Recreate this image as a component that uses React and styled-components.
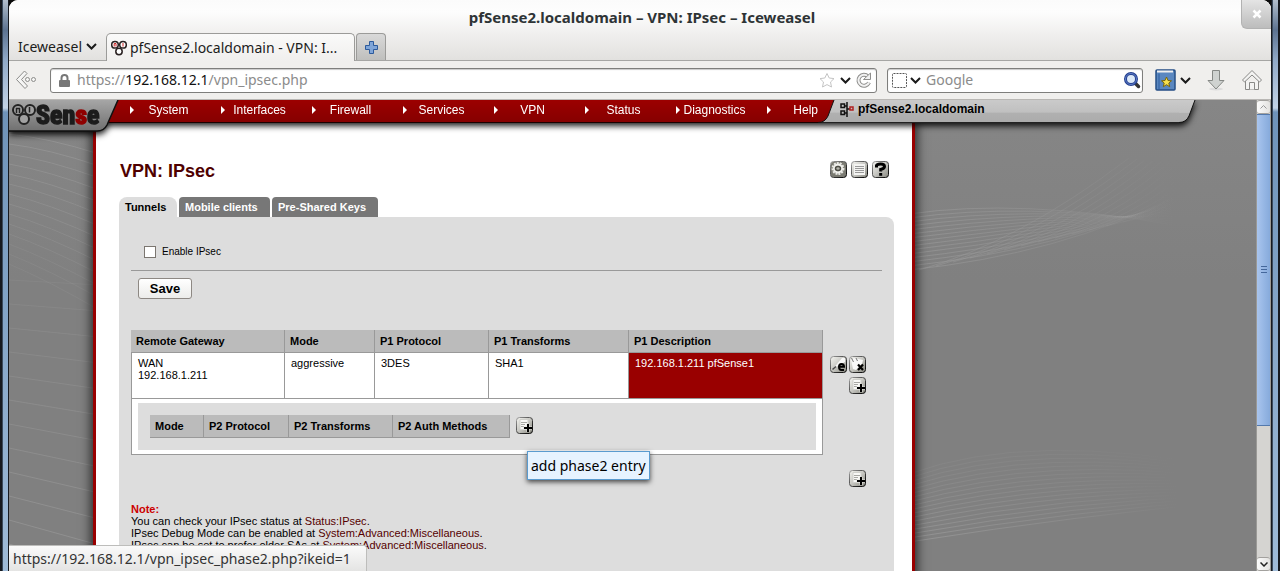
import { useState } from 'react';
import styled, { createGlobalStyle, css } from 'styled-components';

const GlobalStyle = createGlobalStyle`
  * {
    box-sizing: border-box;
  }

  body {
    margin: 0;
    font-family: "Liberation Sans", Arial, sans-serif;
    font-size: 11px;
    line-height: 12px;
    color: #000;
  }

  button {
    padding: 0;
    border: 0;
    background: none;
    cursor: pointer;
  }

  svg {
    display: block;
  }
`;

const chromeFont = css`
  font-family: "Noto Sans", sans-serif;
  font-size: 14px;
  line-height: 20px;
`;

/* ---------- window ---------- */

const Window = styled.div`
  display: flex;
  height: 100vh;
  overflow: hidden;
  background: #0a0a0a;
`;

const Edge = styled.div`
  flex: none;
  width: 9px;
  border: solid #16191f;
  border-width: ${props => props.$side === 'left' ? '0 1px 0 2px' : '0 2px 0 1px'};
  background:
    linear-gradient(90deg, #3b4a5c 0 1px, transparent 1px),
    linear-gradient(#b3bfcd 0, #5d7391 30px, #90a9c8 60px, #c3d3e6 108px, #6f93b9 112px, #9fbbd8 100%);
`;

const Browser = styled.div`
  flex: 1;
  min-width: 0;
  display: flex;
  flex-direction: column;
  background: #f0efed;
  border-radius: 9px 9px 0 0;
  overflow: hidden;
`;

const TopBar = styled.header`
  flex: none;
  background: linear-gradient(#fbfbfb, #fdfdfd 12px, #f0efee 34px, #e2e1df);
  border-bottom: 1px solid #a6a6a4;
`;

const TitleRow = styled.div`
  display: grid;
  grid-template-columns: 30px 1fr 30px;
  height: 33px;
`;

const WindowTitle = styled.div`
  ${chromeFont}
  grid-column: 2;
  padding-top: 7px;
  padding-left: 4px;
  text-align: center;
  font-size: 15px;
  font-weight: 700;
  color: #2e3436;
`;

const CloseButton = styled.button`
  display: grid;
  place-items: center;
  height: 29px;
  background: linear-gradient(#e4e4e4, #bcbcbc);
  border: solid #b2b2b2;
  border-width: 0 0 1px 1px;
  border-radius: 0 8px 0 6px;
`;

const TabRow = styled.div`
  display: flex;
  align-items: flex-end;
  height: 27px;
`;

const AppMenu = styled.button`
  ${chromeFont}
  display: flex;
  align-items: center;
  gap: 4px;
  width: 97px;
  height: 27px;
  padding-left: 9px;
  color: #1c1c1c;
`;

const BrowserTab = styled.button`
  ${chromeFont}
  display: flex;
  align-items: center;
  gap: 3px;
  width: 249px;
  height: 28px;
  margin-bottom: -1px;
  padding-left: 4px;
  background: linear-gradient(#fafafa, #f0efed);
  border: 1px solid #9b9b99;
  border-bottom: 0;
  border-radius: 5px 5px 0 0;
  color: #1c1c1c;
  white-space: nowrap;
`;

const NewTab = styled.button`
  display: grid;
  place-items: center;
  width: 30px;
  height: 27px;
  margin-left: 1px;
  background: linear-gradient(#d9d9d9, #bfbfbd);
  border: 1px solid #9b9b99;
  border-bottom: 0;
  border-radius: 4px 4px 0 0;
`;

const Toolbar = styled.div`
  flex: none;
  display: flex;
  align-items: center;
  height: 39px;
  padding: 0 8px 0 6px;
  border-bottom: 1px solid #b9b7b4;
`;

const ToolButton = styled.button`
  flex: none;
  display: grid;
  place-items: center;
`;

const BackButton = styled(ToolButton)`
  width: 24px;
  margin-right: 11px;
`;

const Field = styled.div`
  ${chromeFont}
  display: flex;
  align-items: center;
  height: 25px;
  background: #fff;
  border: 1px solid #7e7e7c;
  border-radius: 3px;
  box-shadow: inset 0 1px 1px #c9c9c9;
`;

const AddressField = styled(Field)`
  flex: 1;
  gap: 7px;
  padding: 0 4px 0 8px;
`;

const AddressActions = styled.div`
  display: flex;
  align-items: center;
  gap: 4px;
`;

const Address = styled.div`
  flex: 1;
  color: #8b8b8b;
  outline: none;

  b {
    font-weight: 400;
    color: #111;
  }
`;

const SearchField = styled(Field)`
  width: 256px;
  margin: 0 12px 0 10px;
  padding: 0 1px 0 4px;
  gap: 3px;
`;

const SearchInput = styled.input`
  ${chromeFont}
  flex: 1;
  min-width: 0;
  padding: 0 0 0 2px;
  border: 0;
  outline: none;
  background: none;

  &::placeholder {
    color: #8b8b8b;
    opacity: 1;
  }
`;

const Trailing = styled.div`
  display: flex;
  align-items: center;
  gap: 15px;
`;

const BookmarkGroup = styled(ToolButton)`
  grid-auto-flow: column;
  gap: 4px;
`;

/* ---------- viewport ---------- */

const Viewport = styled.div`
  flex: 1;
  min-height: 0;
  display: flex;
`;

const Page = styled.div`
  flex: 1;
  position: relative;
  min-width: 0;
  overflow: hidden;
  background: linear-gradient(#868686, #808080 180px);
`;

const Waves = styled.svg`
  position: absolute;
  top: 0;
  left: 0;
`;

const Scrollbar = styled.div`
  flex: none;
  display: flex;
  flex-direction: column;
  width: 15px;
  background: #d5d4d1;
  border: solid #9a9996;
  border-width: 0 1px;
`;

const ScrollButton = styled.button`
  display: grid;
  place-items: center;
  height: 14px;
  background: linear-gradient(90deg, #fbfbfb, #e3e2e0);
  border: solid #a3a19e;
  border-width: 1px 0;
  border-radius: 3px;
`;

const Thumb = styled.div`
  flex: 311;
  display: grid;
  place-items: center;
  background: linear-gradient(90deg, #a9c5ee, #86aadb);
  border: solid #5479ac;
  border-width: 1px 0;
`;

const Track = styled.div`
  flex: 131;
`;

const StatusBar = styled.div`
  ${chromeFont}
  position: absolute;
  left: 0;
  bottom: 0;
  min-width: 358px;
  height: 26px;
  padding: 3px 4px;
  background: linear-gradient(#fafafa, #e4e4e3);
  border: solid #bdbdbb;
  border-width: 1px 1px 0 0;
  border-radius: 0 3px 0 0;
  color: #333;
`;

/* ---------- pfSense header ---------- */

const SiteHeader = styled.div`
  position: relative;
  z-index: 1;
  display: flex;
  height: 23px;
  filter: drop-shadow(0 3px 3px rgba(0, 0, 0, 0.9));
`;

const Logo = styled.a`
  z-index: 2;
  width: 110px;
  height: 32px;
  margin-right: -12px;
`;

const Menu = styled.nav`
  z-index: 1;
  display: flex;
  padding-left: 16px;
  background: linear-gradient(#9c0000, #860000);
  border-bottom: 1px solid #1a0000;
`;

const MenuItem = styled.a`
  display: grid;
  grid-template-columns: 4px 1fr ${props => props.$last ? '0' : '11px'};
  align-items: center;
  width: ${props => props.$last ? '58px' : '91px'};
  padding-left: 7px;
  padding-bottom: 2px;
  font-size: 12px;
  text-align: ${props => props.$last ? 'right' : 'center'};
  white-space: nowrap;
  color: #fff;
  text-decoration: none;

  &::before {
    content: "";
    border: solid transparent;
    border-width: 4px 0 4px 4px;
    border-left-color: #fff;
  }
`;

const SlantEnd = styled.svg`
  flex: none;
  z-index: ${props => props.$raised ? 1 : 0};
  margin-right: ${props => props.$raised ? '-16px' : '0'};
`;

const HostName = styled.div`
  display: flex;
  align-items: center;
  gap: 4px;
  flex: 0 1 360px;
  padding-left: 21px;
  padding-bottom: 4px;
  background: linear-gradient(#cacaca, #c0c0c0 55%, #b0b0b0 60%, #acacac);
  border-bottom: 1px solid #222;
  font-size: 12px;
  font-weight: 700;
`;

/* ---------- pfSense page ---------- */

const Main = styled.main`
  position: relative;
  width: 822px;
  min-height: 100%;
  margin-left: 84px;
  padding: 38px 18px 0 23px;
  background: #fff;
  border: solid #990000;
  border-width: 0 3px;
  box-shadow: 0 0 10px 2px rgba(0, 0, 0, 0.7);
`;

const Heading = styled.div`
  display: flex;
  justify-content: space-between;
  align-items: flex-start;
  padding-right: 5px;
`;

const Title = styled.h1`
  margin: 0;
  padding-left: 1px;
  font-size: 18px;
  line-height: 20px;
  color: #4f0000;
`;

const IconRow = styled.div`
  display: flex;
  gap: ${props => props.$tight ? '2px' : '4px'};
`;

const Tabs = styled.nav`
  display: flex;
  gap: 2px;
  margin-top: 16px;
`;

const Tab = styled.a`
  width: ${props => props.$width}px;
  height: 20px;
  padding: 4px 6px;
  font-weight: 700;
  white-space: nowrap;
  text-decoration: none;
  color: ${props => props.$active ? '#000' : '#fff'};
  background: ${props => props.$active ? '#dddddd' : '#777777'};
  border-radius: ${props => props.$active ? '8px 8px 0 0' : '4px 4px 0 0'};
`;

const Panel = styled.section`
  min-height: 400px;
  padding: 29px 12px;
  background: #dddddd;
  border-radius: 0 8px 0 0;
`;

const EnableLabel = styled.label`
  display: flex;
  align-items: center;
  gap: 6px;
  padding-left: 13px;
  font-size: 10px;
`;

const Checkbox = styled.input`
  appearance: none;
  width: 12px;
  height: 12px;
  margin: 0;
  background: #fff;
  border: 1px solid #7b7670;

  &:checked {
    background: #555;
  }
`;

const Rule = styled.hr`
  height: 1px;
  margin: 12px 0 7px;
  border: 0;
  background: #999;
`;

const SaveButton = styled.button`
  display: block;
  min-width: 54px;
  height: 21px;
  margin: 0 0 31px 7px;
  background: linear-gradient(#fff, #ececea);
  border: 1px solid #8d8883;
  border-radius: 3px;
  font-family: inherit;
  font-size: 13px;
  font-weight: 700;
`;

const ListArea = styled.div`
  display: flex;
  align-items: flex-start;
  gap: 7px;
`;

const Table = styled.table`
  width: 692px;
  table-layout: fixed;
  border-collapse: separate;
  border-spacing: 0;
`;

const Th = styled.th`
  height: 23px;
  padding: 0 5px;
  text-align: left;
  font-weight: 700;
  white-space: nowrap;
  background: #bbbbbb;
  border: solid #999999;
  border-width: 0 1px 1px 0;
`;

const Td = styled.td`
  height: 46px;
  padding: 4px 6px;
  vertical-align: top;
  background: ${props => props.$highlight ? '#990000' : '#fff'};
  color: ${props => props.$highlight ? '#fff' : '#000'};
  border: solid #999999;
  border-width: 0 1px 1px ${props => props.$first ? '1px' : '0'};
`;

const Phase2 = styled.div`
  display: flex;
  gap: 6px;
  padding: 12px;
  background: #dddddd;
`;

const Phase2Table = styled(Table)`
  width: 360px;
`;

const IconButton = styled.button`
  position: relative;
  width: 17px;
  height: 17px;
`;

const AddPhase2 = styled(IconButton)`
  margin-top: 2px;
`;

const Tooltip = styled.span`
  ${chromeFont}
  position: absolute;
  z-index: 2;
  top: 34px;
  left: 11px;
  padding: 4px 3px 3px;
  background: #e6f3ff;
  border: 1px solid #5a9bcf;
  box-shadow: 0 2px 5px rgba(0, 0, 0, 0.7);
  white-space: nowrap;
`;

const Actions = styled.div`
  display: flex;
  flex-direction: column;
  align-items: flex-end;
  gap: 4px;
  padding-top: 26px;
`;

const AddPhase1 = styled(IconButton)`
  margin-top: 72px;
`;

const Note = styled.p`
  margin: 16px 0 0;

  strong {
    color: #cc0000;
  }

  a {
    color: #550000;
    text-decoration: none;
  }
`;

/* ---------- drawings ---------- */

function Chevron() {
  return (
    <svg width="11" height="7" viewBox="0 0 11 7">
      <path d="M1 1L5.500 5.500L10 1" fill="none" stroke="#1a1a1a" strokeWidth="2" />
    </svg>
  );
}

function PfIcon() {
  return (
    <svg width="16" height="16" viewBox="0 0 16 16" fill="#fff" stroke="#2a2222" strokeWidth="1.500">
      <circle cx="8" cy="11.500" r="3.200" />
      <circle cx="4" cy="4.800" r="3.300" />
      <circle cx="12" cy="4.800" r="3.300" />
      <path d="M3.200 6.500V3.500H5V6.500M12 3V6.500" fill="none" stroke="#c22" strokeWidth="1" />
    </svg>
  );
}

function BackIcon() {
  return (
    <svg width="24" height="22" viewBox="0 0 24 22" fill="#f5f5f4" stroke="#8c8c8a">
      <path d="M9.500 2L1.500 10.500L10 19.500L12.500 17L6.500 10.500L12 4.500Z" />
      <circle cx="12.500" cy="10.500" r="2" />
      <circle cx="18.500" cy="10.500" r="2" />
    </svg>
  );
}

function LockIcon() {
  return (
    <svg width="11" height="13" viewBox="0 0 11 13">
      <path d="M2.500 7V4A3 3 0 0 1 8.500 4V7" fill="none" stroke="#777" strokeWidth="2" />
      <rect x="0" y="6" width="11" height="7" rx="1" fill="#777" />
    </svg>
  );
}

function StarIcon() {
  return (
    <svg width="18" height="17" viewBox="0 0 18 17">
      <path d="M9 1.500L11.200 6L16 6.600L12.500 10L13.500 15L9 12.600L4.500 15L5.500 10L2 6.600L6.800 6Z" fill="#fff" stroke="#c4c4c4" strokeLinejoin="round" />
    </svg>
  );
}

function ReloadIcon() {
  return (
    <svg width="17" height="17" viewBox="0 0 17 17" fill="none">
      <path d="M13 4.500A5.500 5.500 0 1 0 14 10.500" stroke="#8e8e8c" strokeWidth="4" />
      <path d="M13 4.500A5.500 5.500 0 1 0 14 10.500" stroke="#f2f2f2" strokeWidth="2" />
      <path d="M15.500 1V7.500H8.500Z" fill="#f2f2f2" stroke="#8e8e8c" />
    </svg>
  );
}

function MagnifierIcon() {
  return (
    <svg width="18" height="18" viewBox="0 0 18 18">
      <path d="M11.500 11.500L15.500 15.500" stroke="#333" strokeWidth="3.500" strokeLinecap="round" />
      <circle cx="8" cy="8" r="5.500" fill="#dce9f8" stroke="#24408e" strokeWidth="3" />
      <circle cx="8" cy="8" r="5.500" fill="none" stroke="#5d7cc9" strokeWidth="1" />
    </svg>
  );
}

function BookIcon() {
  return (
    <svg width="21" height="22" viewBox="0 0 21 22">
      <rect x="1" y="1" width="19" height="20" rx="1" fill="#5a87c0" stroke="#244e85" strokeWidth="1.500" />
      <path d="M2 2.500H18" stroke="#f0f0f0" strokeWidth="2" />
      <path d="M4 4.500V20" stroke="#2f5f9f" />
      <path d="M11.500 8L13 11.500L16.500 11.800L13.800 14L14.700 17.700L11.500 15.700L8.300 17.700L9.200 14L6.500 11.800L10 11.500Z" fill="#f6e04e" stroke="#7a6508" />
    </svg>
  );
}

function DownloadIcon() {
  return (
    <svg width="20" height="22" viewBox="0 0 20 22">
      <ellipse cx="10" cy="20" rx="7" ry="1.500" fill="#ddd" />
      <path d="M6.500 1.500H13.500V11.500H18L10 20L2 11.500H6.500Z" fill="#cfd2d0" stroke="#858885" />
    </svg>
  );
}

function HomeIcon() {
  return (
    <svg width="22" height="22" viewBox="0 0 22 22" fill="#f3f3f2" stroke="#898987">
      <path d="M4.500 12V20.500H17.500V12" />
      <path d="M8.500 20.500V13.500H13.500V20.500" />
      <path d="M11 1.500L1.500 11L3.500 13L11 6L18.500 13L20.500 11Z" />
    </svg>
  );
}

function LogoArt() {
  return (
    <svg width="110" height="32" viewBox="0 0 110 32">
      <defs>
        <linearGradient id="logoFill" x1="0" y1="0" x2="0" y2="1">
          <stop offset="0" stopColor="#a6a6a6" />
          <stop offset="1" stopColor="#707070" />
        </linearGradient>
      </defs>
      <path d="M0 0H109L98 25Q95 31 88 31H0Z" fill="url(#logoFill)" />
      <path d="M109 0L98 25Q95 31 88 31H0" fill="none" stroke="#111" strokeWidth="1.500" />
      <g fill="#a2a2a2" stroke="#222" strokeWidth="2">
        <circle cx="15" cy="19" r="5" />
        <circle cx="9" cy="10" r="5" />
        <circle cx="21" cy="10" r="5" />
        <path d="M7.500 13V8.500H10.500V13M20.500 7V12.500" fill="none" strokeWidth="1.500" />
      </g>
      <text x="27" y="24" fontFamily="'Liberation Sans Narrow', 'Roboto Condensed', 'DejaVu Sans Condensed'" fontSize="26" fontWeight="700" fill="#1c1c1c" stroke="#1c1c1c" strokeWidth="1.500">
        Sen<tspan fill="#8f0000" stroke="#8f0000">s</tspan>e
      </text>
    </svg>
  );
}

function Slant({ stops, id, raised }) {
  return (
    <SlantEnd $raised={raised} width="17" height="23" viewBox="0 0 17 23">
      <defs>
        <linearGradient id={id} x1="0" y1="0" x2="0" y2="1">
          {stops.map(([offset, color]) => <stop key={offset} offset={offset} stopColor={color} />)}
        </linearGradient>
      </defs>
      <path d="M0 0H16L10 16Q7 22.500 0 22.500Z" fill={`url(#${id})`} />
      <path d="M16 0L10 16Q7 22.500 0 22.500" fill="none" stroke="#111" />
    </SlantEnd>
  );
}

function HostIcon() {
  return (
    <svg width="14" height="15" viewBox="0 0 14 15" fill="none" stroke="#111" strokeWidth="1.500">
      <path d="M7 0V15M4 4H7M4 11H7M7 7H10" />
      <rect x="1" y="2" width="3.500" height="3.500" />
      <rect x="1" y="9" width="3.500" height="3.500" />
      <rect x="10" y="5" width="3" height="3" stroke="#b02020" />
    </svg>
  );
}

const glyphs = {
  gear: (
    <g fill="none">
      <rect x="1" y="1" width="15" height="15" rx="2" fill="#7b7b72" />
      <circle cx="8" cy="7.500" r="5.500" stroke="#e8e8e4" strokeWidth="2" strokeDasharray="2 1" />
      <circle cx="8" cy="7.500" r="4" fill="#c9c9c3" stroke="#f2f2ee" strokeWidth="2" />
      <ellipse cx="8" cy="7.500" rx="2.500" ry="2" fill="#b4b4ac" stroke="#4b4b44" strokeWidth="1.500" />
    </g>
  ),
  log: (
    <g>
      <rect x="3" y="3" width="11" height="11" fill="#f4f4f2" />
      <path d="M4 5.500H13M4 7.500H13M4 9.500H13M4 11.500H13" stroke="#999" />
    </g>
  ),
  help: (
    <g fill="none" stroke="#000" strokeWidth="3">
      <path d="M4.500 6.500V4.500Q5 3 8.500 3Q12.500 3 12.500 5.500Q12.500 7.500 8.700 8.500V10.500" />
      <path d="M8.700 12V14.800" />
    </g>
  ),
  add: (
    <g fill="none">
      <path d="M4 2.500H12V12.500H4Z" fill="#f8f8f6" stroke="#d0d0cc" />
      <path d="M5 5.500H11M5 7.500H9M5 9.500H8" stroke="#a8a8a4" />
      <path d="M7.500 11H16M12 7V15" stroke="#e6e6e2" strokeWidth="3" />
      <path d="M8 11H16M12 7V15" stroke="#000" strokeWidth="2" />
    </g>
  ),
  edit: (
    <g fill="none">
      <path d="M2 14L12 2L15 2V6L8 10Z" fill="#f8f8f8" />
      <path d="M2.500 13.500L6 10.500" stroke="#444" strokeWidth="1.500" />
      <path d="M9 10.800H14Q14 8 11.500 8Q9 8 9 10.800Q9 14 11.500 14H14" stroke="#000" strokeWidth="2" />
    </g>
  ),
  remove: (
    <g fill="none">
      <path d="M2 4L5 2L14 4L13 8L7 14L4 13Z" fill="#f8f8f8" />
      <path d="M2.500 2L4.500 6M7 2L8.500 5" stroke="#777" />
      <path d="M9 8.500L14 14M14 8.500L9 14" stroke="#000" strokeWidth="2.200" />
    </g>
  ),
};

function Glyph({ name }) {
  return (
    <svg width="17" height="17" viewBox="0 0 17 17">
      <defs>
        <linearGradient id={`face-${name}`} x1="0" y1="0" x2="1" y2="1">
          <stop offset="0" stopColor="#f4f4f0" />
          <stop offset="0.500" stopColor="#c6c6c1" />
          <stop offset="1" stopColor="#85857c" />
        </linearGradient>
        <linearGradient id={`rim-${name}`} x1="0" y1="0" x2="1" y2="1">
          <stop offset="0" stopColor="#a0a0a0" />
          <stop offset="0.500" stopColor="#444" />
          <stop offset="1" stopColor="#000" />
        </linearGradient>
      </defs>
      <rect x="0.500" y="0.500" width="16" height="16" rx="3" fill={`url(#face-${name})`} />
      {glyphs[name]}
      <rect x="0.500" y="0.500" width="16" height="16" rx="3" fill="none" stroke={`url(#rim-${name})`} />
    </svg>
  );
}

function range(n) {
  return Array.from({ length: n }, (_, i) => i);
}

function BackgroundWaves() {
  return (
    <Waves width="1247" height="471" viewBox="0 0 1247 471" fill="none" aria-hidden="true">
      <defs>
        <linearGradient id="fade" gradientUnits="userSpaceOnUse" x1="905" y1="0" x2="1170" y2="0">
          <stop offset="0" stopColor="#9c9c9c" />
          <stop offset="0.6" stopColor="#9c9c9c" stopOpacity="0.5" />
          <stop offset="1" stopColor="#9c9c9c" stopOpacity="0" />
        </linearGradient>
      </defs>
      <g stroke="#989898">
        {range(14).map(i => <path key={i} d={`M0 ${34 + i * 10}Q40 ${38 + i * 11} 90 ${54 + i * 12}`} opacity={0.7 - i / 28} />)}
        {range(13).map(i => <path key={i} d={`M0 ${180 + i * 24}L90 ${185 + i * 26}`} opacity={0.25 + i / 24} />)}
      </g>
      <g stroke="url(#fade)">
        {range(15).map(i => (
          <path key={i} d={`M900 ${114 + i * 4}Q${1010 + i * 3} ${98 + i * 4} 1165 ${125 - i * 2}`} opacity="0.6" />
        ))}
        {range(13).map(i => (
          <path key={i} d={`M${910 + i * 17} ${170 - i * 4}Q${1010 + i * 15} ${142 - i * 3} ${1120 + i * 8} ${58 + i}`} opacity="0.5" />
        ))}
        {range(18).map(i => (
          <path key={i} d={`M900 ${374 + i * 4}Q${1020 + i * 3} ${330 + i * 5} 1220 ${368 + i * 2}`} opacity={0.2 + i / 34} />
        ))}
      </g>
    </Waves>
  );
}

/* ---------- data ---------- */

const menuItems = ['System', 'Interfaces', 'Firewall', 'Services', 'VPN', 'Status', 'Diagnostics', 'Help'];

const tabs = [
  { label: 'Tunnels', width: 58 },
  { label: 'Mobile clients', width: 91 },
  { label: 'Pre-Shared Keys', width: 106 },
];

const phase1Columns = [
  { label: 'Remote Gateway', width: 154 },
  { label: 'Mode', width: 90 },
  { label: 'P1 Protocol', width: 114 },
  { label: 'P1 Transforms', width: 140 },
  { label: 'P1 Description', width: 194 },
];

const phase2Columns = [
  { label: 'Mode', width: 54 },
  { label: 'P2 Protocol', width: 85 },
  { label: 'P2 Transforms', width: 104 },
  { label: 'P2 Auth Methods', width: 117 },
];

function Columns({ items }) {
  return (
    <colgroup>
      {items.map(c => <col key={c.label} width={c.width} />)}
    </colgroup>
  );
}

function BrowserChrome() {
  return (
    <>
      <TopBar>
        <TitleRow>
          <WindowTitle>pfSense2.localdomain – VPN: IPsec – Iceweasel</WindowTitle>
          <CloseButton aria-label="Close">
            <svg width="10" height="10" viewBox="0 0 10 10">
              <path d="M1.500 1.500L8.500 8.500M8.500 1.500L1.500 8.500" stroke="#fff" strokeWidth="2.500" />
            </svg>
          </CloseButton>
        </TitleRow>
        <TabRow>
          <AppMenu>Iceweasel<Chevron /></AppMenu>
          <BrowserTab><PfIcon />pfSense2.localdomain - VPN: I...</BrowserTab>
          <NewTab aria-label="New tab">
            <svg width="13" height="13" viewBox="0 0 13 13">
              <path d="M4.500 0.500H8.500V4.500H12.500V8.500H8.500V12.500H4.500V8.500H0.500V4.500H4.500Z" fill="#7fa5d8" stroke="#2c5a9c" />
            </svg>
          </NewTab>
        </TabRow>
      </TopBar>
      <Toolbar>
        <BackButton aria-label="Back"><BackIcon /></BackButton>
        <AddressField>
          <LockIcon />
          <Address role="textbox" aria-label="Address" contentEditable suppressContentEditableWarning spellCheck={false}>
            https://<b>192.168.12.1</b>/vpn_ipsec.php
          </Address>
          <AddressActions>
            <ToolButton aria-label="Bookmark"><StarIcon /></ToolButton>
            <Chevron />
            <ToolButton aria-label="Reload"><ReloadIcon /></ToolButton>
          </AddressActions>
        </AddressField>
        <SearchField>
          <svg width="15" height="15" viewBox="0 0 15 15">
            <rect x="0.500" y="0.500" width="14" height="14" rx="1" fill="none" stroke="#555" strokeDasharray="2 1" />
          </svg>
          <Chevron />
          <SearchInput placeholder="Google" aria-label="Search" />
          <ToolButton aria-label="Go"><MagnifierIcon /></ToolButton>
        </SearchField>
        <Trailing>
          <BookmarkGroup aria-label="Bookmarks"><BookIcon /><Chevron /></BookmarkGroup>
          <ToolButton aria-label="Downloads"><DownloadIcon /></ToolButton>
          <ToolButton aria-label="Home"><HomeIcon /></ToolButton>
        </Trailing>
      </Toolbar>
    </>
  );
}

function Phase1List() {
  return (
    <ListArea>
      <Table>
        <Columns items={phase1Columns} />
        <thead>
          <tr>
            {phase1Columns.map(c => <Th key={c.label}>{c.label}</Th>)}
          </tr>
        </thead>
        <tbody>
          <tr>
            <Td $first>WAN<br />192.168.1.211</Td>
            <Td>aggressive</Td>
            <Td>3DES</Td>
            <Td>SHA1</Td>
            <Td $highlight>192.168.1.211 pfSense1</Td>
          </tr>
          <tr>
            <Td $first colSpan={5}>
              <Phase2>
                <Phase2Table>
                  <Columns items={phase2Columns} />
                  <thead>
                    <tr>
                      {phase2Columns.map(c => <Th key={c.label}>{c.label}</Th>)}
                    </tr>
                  </thead>
                </Phase2Table>
                <AddPhase2 aria-label="add phase2 entry">
                  <Glyph name="add" />
                  <Tooltip role="tooltip">add phase2 entry</Tooltip>
                </AddPhase2>
              </Phase2>
            </Td>
          </tr>
        </tbody>
      </Table>
      <Actions>
        <IconRow $tight>
          <IconButton aria-label="edit phase1 entry"><Glyph name="edit" /></IconButton>
          <IconButton aria-label="delete phase1 entry"><Glyph name="remove" /></IconButton>
        </IconRow>
        <IconButton aria-label="copy phase1 entry"><Glyph name="add" /></IconButton>
        <AddPhase1 aria-label="add new phase1"><Glyph name="add" /></AddPhase1>
      </Actions>
    </ListArea>
  );
}

const redStops = [[0, '#9c0000'], [1, '#860000']];
const greyStops = [[0, '#cacaca'], [0.55, '#c0c0c0'], [0.6, '#b0b0b0'], [1, '#acacac']];

function App() {
  const [enabled, setEnabled] = useState(false);

  return (
    <Window>
      <GlobalStyle />
      <Edge $side="left" />
      <Browser>
        <BrowserChrome />
        <Viewport>
          <Page>
            <BackgroundWaves />
            <SiteHeader>
              <Logo href="#" aria-label="pfSense"><LogoArt /></Logo>
              <Menu>
                {menuItems.map((item, index) => (
                  <MenuItem key={item} href="#" $last={index === menuItems.length - 1}>{item}</MenuItem>
                ))}
              </Menu>
              <Slant id="redEnd" stops={redStops} raised />
              <HostName><HostIcon />pfSense2.localdomain</HostName>
              <Slant id="greyEnd" stops={greyStops} />
            </SiteHeader>
            <Main>
              <Heading>
                <Title>VPN: IPsec</Title>
                <IconRow>
                  <IconButton aria-label="Service settings"><Glyph name="gear" /></IconButton>
                  <IconButton aria-label="Logs"><Glyph name="log" /></IconButton>
                  <IconButton aria-label="Help"><Glyph name="help" /></IconButton>
                </IconRow>
              </Heading>
              <Tabs>
                {tabs.map((tab, index) => (
                  <Tab key={tab.label} href="#" $width={tab.width} $active={index === 0}>{tab.label}</Tab>
                ))}
              </Tabs>
              <Panel>
                <EnableLabel>
                  <Checkbox type="checkbox" checked={enabled} onChange={() => setEnabled(!enabled)} />
                  Enable IPsec
                </EnableLabel>
                <Rule />
                <SaveButton>Save</SaveButton>
                <Phase1List />
                <Note>
                  <strong>Note:</strong><br />
                  You can check your IPsec status at <a href="#">Status:IPsec</a>.<br />
                  IPsec Debug Mode can be enabled at <a href="#">System:Advanced:Miscellaneous</a>.<br />
                  IPsec can be set to prefer older SAs at <a href="#">System:Advanced:Miscellaneous</a>.
                </Note>
              </Panel>
            </Main>
            <StatusBar>https://192.168.12.1/vpn_ipsec_phase2.php?ikeid=1</StatusBar>
          </Page>
          <Scrollbar>
            <ScrollButton aria-label="Scroll up">
              <svg width="7" height="4" viewBox="0 0 7 4"><path d="M0.500 3.500L3.500 0.500L6.500 3.500" fill="none" stroke="#999" /></svg>
            </ScrollButton>
            <Thumb>
              <svg width="6" height="8" viewBox="0 0 6 8"><path d="M0 0.500H6M0 3.500H6M0 6.500H6" stroke="#44679b" /></svg>
            </Thumb>
            <Track />
            <ScrollButton aria-label="Scroll down">
              <svg width="8" height="5" viewBox="0 0 8 5"><path d="M0.500 0.500L4 4L7.500 0.500" fill="none" stroke="#222" strokeWidth="1.500" /></svg>
            </ScrollButton>
          </Scrollbar>
        </Viewport>
      </Browser>
      <Edge $side="right" />
    </Window>
  );
}

export default App;
